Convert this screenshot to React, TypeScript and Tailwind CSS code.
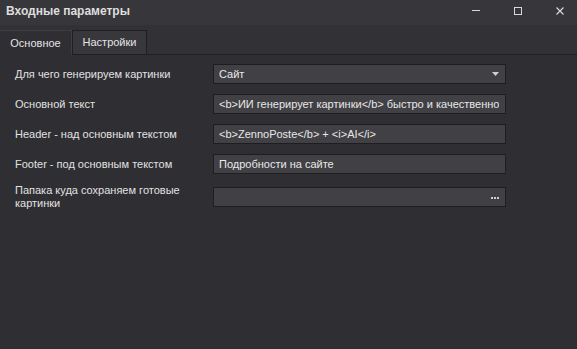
import React from "react";

const rows: { label: string; value: string; kind?: "select" | "browse" }[] = [
  { label: "Для чего генерируем картинки", value: "Сайт", kind: "select" },
  { label: "Основной текст", value: "<b>ИИ генерирует картинки</b> быстро и качественно" },
  { label: "Header - над основным текстом", value: "<b>ZennoPoste</b> + <i>AI</i>" },
  { label: "Footer - под основным текстом", value: "Подробности на сайте" },
  { label: "Папака куда сохраняем готовые картинки", value: "", kind: "browse" },
];

export default function App() {
  return (
    <div
      className="w-[577px] h-[349px] bg-[#2f2e33] text-[#dcdcdc] flex flex-col overflow-hidden"
      style={{ fontFamily: '"Liberation Sans", Arial, sans-serif' }}
    >
      {/* title bar */}
      <div className="h-[25px] bg-[#37363b] shrink-0">
        <div className="h-[21px] flex items-center pl-[6px]">
          <div className="text-[12px] font-bold text-[#dedede] flex-1 leading-none">Входные параметры</div>
          <div className="flex items-center gap-[34px] pr-[13px]">
            <div className="w-[8px] h-[8px] flex items-center">
              <div className="w-[8px] h-[1px] bg-[#d8d8d8]" />
            </div>
            <div className="w-[8px] h-[8px] border border-[#d8d8d8]" />
            <svg width="8" height="8" viewBox="0 0 8 8">
              <path d="M0.5 0.5 L7.5 7.5 M7.5 0.5 L0.5 7.5" stroke="#d8d8d8" strokeWidth="1.2" />
            </svg>
          </div>
        </div>
      </div>
      {/* tabs */}
      <div className="h-[30px] shrink-0 flex items-end border-b border-[#1f1f22] bg-[#323136]">
        <div className="h-[25px] w-[72px] bg-[#2f2e33] border-t border-r border-[#3e3d42] flex items-center justify-center text-[11px] text-[#e4e4e4] -mb-px">
          Основное
        </div>
        <div className="h-[24px] w-[75px] bg-[#38373c] border border-b-0 border-[#1f1f22] flex items-center justify-center text-[11px] text-[#e4e4e4]">
          Настройки
        </div>
      </div>
      {/* form */}
      <div className="flex flex-col pt-[9px] gap-[10px]">
        {rows.map((r, i) => (
          <div key={i} className="flex items-center min-h-[20px]">
            <div className="w-[213px] pl-[15px] pr-[20px] text-[11px] leading-[13px] text-[#e2e2e2]">
              {r.label}
            </div>
            <div className="w-[293px] h-[20px] bg-[#414045] border border-[#1e1e21] flex items-center pl-[5px] pr-[6px] overflow-hidden">
              <div className="flex-1 min-w-0 text-[11px] text-[#e8e8e8] whitespace-nowrap overflow-hidden leading-none">
                {r.value}
              </div>
              {r.kind === "select" && (
                <svg width="7" height="4" viewBox="0 0 7 4" className="shrink-0">
                  <path d="M0 0 H7 L3.5 4 Z" fill="#cfcfcf" />
                </svg>
              )}
              {r.kind === "browse" && (
                <div className="flex gap-[1px] shrink-0 mt-[2px]">
                  <div className="w-[2px] h-[2px] bg-[#cfcfcf]" />
                  <div className="w-[2px] h-[2px] bg-[#cfcfcf]" />
                  <div className="w-[2px] h-[2px] bg-[#cfcfcf]" />
                </div>
              )}
            </div>
          </div>
        ))}
      </div>
    </div>
  );
}
